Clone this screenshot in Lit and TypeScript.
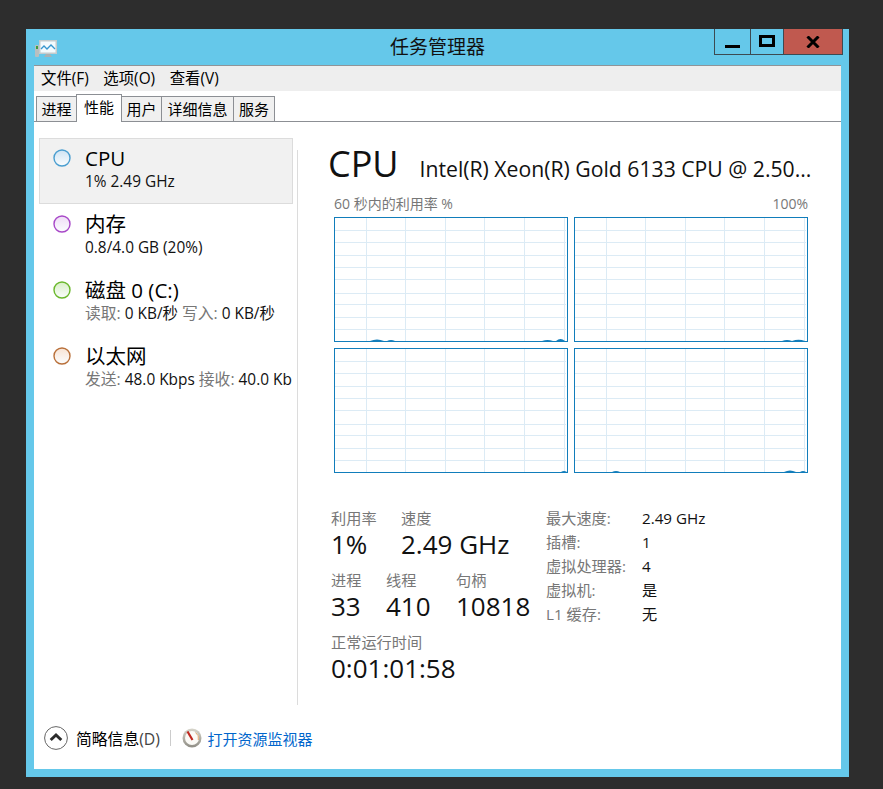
import { LitElement, html, css, svg } from "lit";
import { customElement, property } from "lit/decorators.js";

const VX = [32, 71, 111, 150, 190, 230];
const HY = [13, 25, 38, 50, 62, 76, 87, 100, 112];

@customElement("cpu-chart")
class CpuChart extends LitElement {
  @property({ type: Array }) bumps: number[][] = [];
  static styles = css`
    :host { display: block; width: 234px; height: 125px; }
    svg { display: block; }
    .grid { stroke: #dcebf5; stroke-width: 1; }
    .frame { fill: none; stroke: #117dbb; stroke-width: 1; }
    .area { fill: #117dbb; }
  `;
  render() {
    return html`<svg width="234" height="125" viewBox="0 0 234 125">
      ${VX.map((x) => svg`<line class="grid" x1=${x + 0.5} x2=${x + 0.5} y1="1" y2="124"></line>`)}
      ${HY.map((y) => svg`<line class="grid" x1="1" x2="232" y1=${y + 0.5} y2=${y + 0.5}></line>`)}
      ${this.bumps.map(([x, w, h]) => svg`<path class="area" d="M${x} 124 Q${x + w / 2} ${124 - h * 2} ${x + w} 124 Z"></path>`)}
      <rect class="frame" x="0.5" y="0.5" width="233" height="124"></rect>
    </svg>`;
  }
}

const NAV = [
  { id: "a", title: "CPU", stroke: "#4a9ed0", fill: "#cfe3f3", sub: html`<span class="v">1% 2.49 GHz</span>`, active: true },
  { id: "b", title: "内存", stroke: "#a848c8", fill: "#efdcf6", sub: html`<span class="v">0.8/4.0 GB (20%)</span>` },
  { id: "c", title: "磁盘 0 (C:)", stroke: "#6ab82c", fill: "#d8efc6", sub: html`<span class="l">读取:</span> <span class="v">0 KB/秒</span> <span class="l">写入:</span> <span class="v">0 KB/秒</span>` },
  { id: "d", title: "以太网", stroke: "#b9703a", fill: "#f8e3d4", sub: html`<span class="l">发送:</span> <span class="v">48.0 Kbps</span> <span class="l">接收:</span> <span class="v">40.0 Kb</span>` },
];

const CHARTS: number[][][] = [
  [[36, 14, 1.5], [53, 8, 1], [208, 11, 1], [222, 9, 2]],
  [[208, 10, 1], [218, 13, 1.2]],
  [[227, 6, 1]],
  [[38, 8, 1], [210, 12, 1.5], [226, 6, 1]],
];

const SPECS = [
  ["最大速度:", "2.49 GHz"],
  ["插槽:", "1"],
  ["虚拟处理器:", "4"],
  ["虚拟机:", "是"],
  ["L1 缓存:", "无"],
];

@customElement("app-root")
class AppRoot extends LitElement {
  static styles = css`
    :host {
      display: block;
      width: 883px;
      height: 789px;
      box-sizing: border-box;
      padding: 29px 0 0 26px;
      background: #2d2d2d;
      font-family: "Open Sans", "Noto Sans CJK SC", sans-serif;
      color: #000;
      overflow: hidden;
    }
    .window {
      width: 823px;
      height: 748px;
      box-sizing: border-box;
      padding: 0 8px 8px;
      background: #65c8ea;
      display: flex;
      flex-direction: column;
    }
    .titlebar {
      height: 36px;
      flex: none;
      display: grid;
      grid-template-columns: 1fr auto 1fr;
      margin-right: -2px;
    }
    .app-icon { display: block; margin: 10px 0 0 1px; }
    .title { font-size: 19px; line-height: 36px; color: #111; padding-right: 2px; }
    .controls { justify-self: end; display: flex; height: 26px; align-self: start; border: 1px solid #3c4a52; border-top: 0; box-sizing: border-box; }
    .ctl { display: flex; align-items: center; justify-content: center; box-sizing: border-box; border-right: 1px solid #3c4a52; }
    .ctl.min { width: 36px; }
    .ctl.max { width: 33px; }
    .ctl.close { width: 58px; background: #c0594f; border-right: 0; }
    .client {
      flex: 1;
      background: #fff;
      border-top: 1px solid #8f9498;
      display: flex;
      flex-direction: column;
      min-height: 0;
    }
    .menu {
      height: 25px;
      background: #eeeeee;
      display: flex;
      gap: 14.5px;
      padding-left: 7px;
      font-size: 15.4px;
      line-height: 25px;
      flex: none;
    }
    .tabs {
      height: 31px;
      box-sizing: border-box;
      flex: none;
      display: flex;
      align-items: flex-end;
      padding-left: 2px;
      border-bottom: 1px solid #8c8f94;
      font-size: 15px;
    }
    .tab {
      height: 25px;
      box-sizing: border-box;
      border: 1px solid #8c8f94;
      border-bottom: 0;
      background: #f0f0f0;
      margin-right: -1px;
      padding: 0 4.5px;
      line-height: 24px;
    }
    .tab.on {
      height: 28px;
      margin-bottom: -1px;
      background: #fff;
      position: relative;
      line-height: 24px;
      padding: 0 7px;
    }
    .tab.wide { padding: 0 5.5px; }
    .tab.last { padding: 0 5px; }
    .body { flex: 1; display: flex; min-height: 0; }
    .nav {
      width: 262px;
      flex: none;
      box-sizing: border-box;
      padding: 16px 0 0 5px;
      overflow: hidden;
    }
    .divider { width: 1px; flex: none; height: 555px; margin: 28px 0 0 1px; background: #dcdcdc; }
    .item {
      width: 254px;
      height: 66px;
      box-sizing: border-box;
      border: 1px solid transparent;
      display: flex;
      padding: 6px 0 0 13px;
      gap: 14px;
    }
    .item.on { background: #f1f1f1; border-color: #dcdcdc; }
    .dot { margin-top: 4px; flex: none; display: block; }
    .item-text { white-space: nowrap; }
    .item-title { font-size: 20.5px; line-height: 26px; }
    .item-sub { font-size: 15.4px; line-height: 21px; }
    .item-sub .l { font-size: 15.8px; }
    .l { color: #777; }
    .v { color: #111; }
    .main { flex: 1; padding: 17px 0 0 30px; min-width: 0; }
    .head { display: flex; align-items: flex-start; gap: 21px; height: 52px; white-space: nowrap; }
    .head-cpu { font-size: 36px; line-height: 52px; color: #111; margin-top: -1px; }
    .head-name { font-size: 21.2px; line-height: 28px; margin-top: 16px; color: #111; }
    .axis { display: flex; justify-content: space-between; width: 474px; margin-left: 6px; font-size: 14px; line-height: 18px; color: #777; margin-top: 4px; }
    .charts { display: grid; grid-template-columns: 234px 234px; gap: 6px; margin: 4px 0 0 6px; }
    .stats { display: flex; margin: 33px 0 0 3px; }
    .left { width: 215px; flex: none; }
    .row { display: flex; margin-bottom: 10px; }
    .stat { flex: none; }
    .stat-l { font-size: 15.2px; line-height: 24px; color: #777; white-space: nowrap; }
    .stat-v { font-size: 26px; line-height: 28px; color: #111; white-space: nowrap; }
    .w70 { width: 70px; }
    .w55 { width: 55px; }
    .w70b { width: 70px; }
    .spec { display: grid; grid-template-columns: 96px auto; grid-auto-rows: 24px; font-size: 15.2px; line-height: 24px; }
    .footer {
      height: 64px;
      box-sizing: border-box;
      padding: 2px 0 0 10px;
      flex: none;
      display: flex;
      align-items: center;
    }
    .brief { font-size: 15.8px; margin-left: 8px; }
    .brief span { color: #444; }
    .sep { width: 1px; height: 16px; background: #ccc; margin: 0 11px 0 10.5px; }
    .link { color: #0066cc; font-size: 15px; margin-left: 5px; }
  `;

  render() {
    return html`<div class="window">
      <div class="titlebar">
        <svg class="app-icon" width="22" height="18" viewBox="0 0 22 18">
          <rect x="0" y="6" width="4" height="12" rx="1" fill="#b9bfc0"></rect>
          <rect x="1" y="7" width="2" height="3" fill="#3e9c3e"></rect>
          <rect x="4" y="1" width="18" height="14" fill="#c4cbcd"></rect>
          <rect x="5.5" y="2.5" width="15" height="11" fill="#f4fbfe"></rect>
          <path d="M6 10L9 7L12 10L16 6L20 10" fill="none" stroke="#3796cf" stroke-width="1.3"></path>
          <path d="M11 15h4l2 3H9z" fill="#a9b1b3"></path>
        </svg>
        <div class="title">任务管理器</div>
        <div class="controls">
          <div class="ctl min"><svg width="16" height="14" viewBox="0 0 16 14"><rect x="0" y="10" width="15" height="3" fill="#000"></rect></svg></div>
          <div class="ctl max"><svg width="16" height="14" viewBox="0 0 16 14"><rect x="1.5" y="1.5" width="13" height="9" fill="none" stroke="#000" stroke-width="3"></rect></svg></div>
          <div class="ctl close"><svg width="14" height="12" viewBox="0 0 14 12"><path d="M1.5 0.5L12.5 11.5M12.5 0.5L1.5 11.5" stroke="#000" stroke-width="3" fill="none"></path></svg></div>
        </div>
      </div>
      <div class="client">
        <div class="menu"><span>文件(F)</span><span>选项(O)</span><span>查看(V)</span></div>
        <div class="tabs">
          <div class="tab">进程</div><div class="tab on">性能</div><div class="tab">用户</div><div class="tab wide">详细信息</div><div class="tab last">服务</div>
        </div>
        <div class="body">
          <div class="nav">
            ${NAV.map((n) => html`<div class="item ${n.active ? "on" : ""}">
              <svg class="dot" width="18" height="18" viewBox="0 0 18 18">
                <defs><linearGradient id="g${n.id}" x1="0" y1="0" x2="0" y2="1">
                  <stop offset="0" stop-color="${n.fill}"></stop><stop offset="1" stop-color="#fbfdfe"></stop>
                </linearGradient></defs>
                <circle cx="9" cy="9" r="8" fill="url(#g${n.id})" stroke="${n.stroke}" stroke-width="1.4"></circle>
              </svg>
              <div class="item-text">
                <div class="item-title">${n.title}</div>
                <div class="item-sub">${n.sub}</div>
              </div>
            </div>`)}
          </div>
          <div class="divider"></div>
          <div class="main">
            <div class="head"><span class="head-cpu">CPU</span><span class="head-name">Intel(R) Xeon(R) Gold 6133 CPU @ 2.50...</span></div>
            <div class="axis"><span>60 秒内的利用率 %</span><span>100%</span></div>
            <div class="charts">
              ${CHARTS.map((b) => html`<cpu-chart .bumps=${b}></cpu-chart>`)}
            </div>
            <div class="stats">
              <div class="left">
                <div class="row">
                  <div class="stat w70"><div class="stat-l">利用率</div><div class="stat-v">1%</div></div>
                  <div class="stat"><div class="stat-l">速度</div><div class="stat-v">2.49 GHz</div></div>
                </div>
                <div class="row">
                  <div class="stat w55"><div class="stat-l">进程</div><div class="stat-v">33</div></div>
                  <div class="stat w70b"><div class="stat-l">线程</div><div class="stat-v">410</div></div>
                  <div class="stat"><div class="stat-l">句柄</div><div class="stat-v">10818</div></div>
                </div>
                <div class="row">
                  <div class="stat"><div class="stat-l">正常运行时间</div><div class="stat-v">0:01:01:58</div></div>
                </div>
              </div>
              <div class="spec">
                ${SPECS.map(([k, v]) => html`<span class="l">${k}</span><span class="v">${v}</span>`)}
              </div>
            </div>
          </div>
        </div>
        <div class="footer">
          <svg width="24" height="24" viewBox="0 0 24 24">
            <circle cx="12" cy="12" r="11.4" fill="#fff" stroke="#666" stroke-width="1"></circle>
            <path d="M6.7 14L12 9L17.3 14" fill="none" stroke="#2c2c2c" stroke-width="3"></path>
          </svg>
          <div class="brief">简略信息<span>(D)</span></div>
          <div class="sep"></div>
          <svg width="20" height="20" viewBox="0 0 20 20">
            <defs><linearGradient id="ring" x1="0" y1="0" x2="0" y2="1"><stop offset="0" stop-color="#d8d6cc"></stop><stop offset="1" stop-color="#8f8d85"></stop></linearGradient></defs>
            <circle cx="10" cy="10" r="9.5" fill="url(#ring)"></circle>
            <circle cx="10" cy="10" r="7" fill="#fbfaf6"></circle>
            <path d="M13.5 4.5A7 7 0 0 1 16.3 12" fill="none" stroke="#e2a66e" stroke-width="1"></path>
            <path d="M5.5 3.5L10.5 12" stroke="#c0281f" stroke-width="2.2"></path>
          </svg>
          <div class="link">打开资源监视器</div>
        </div>
      </div>
    </div>`;
  }
}
